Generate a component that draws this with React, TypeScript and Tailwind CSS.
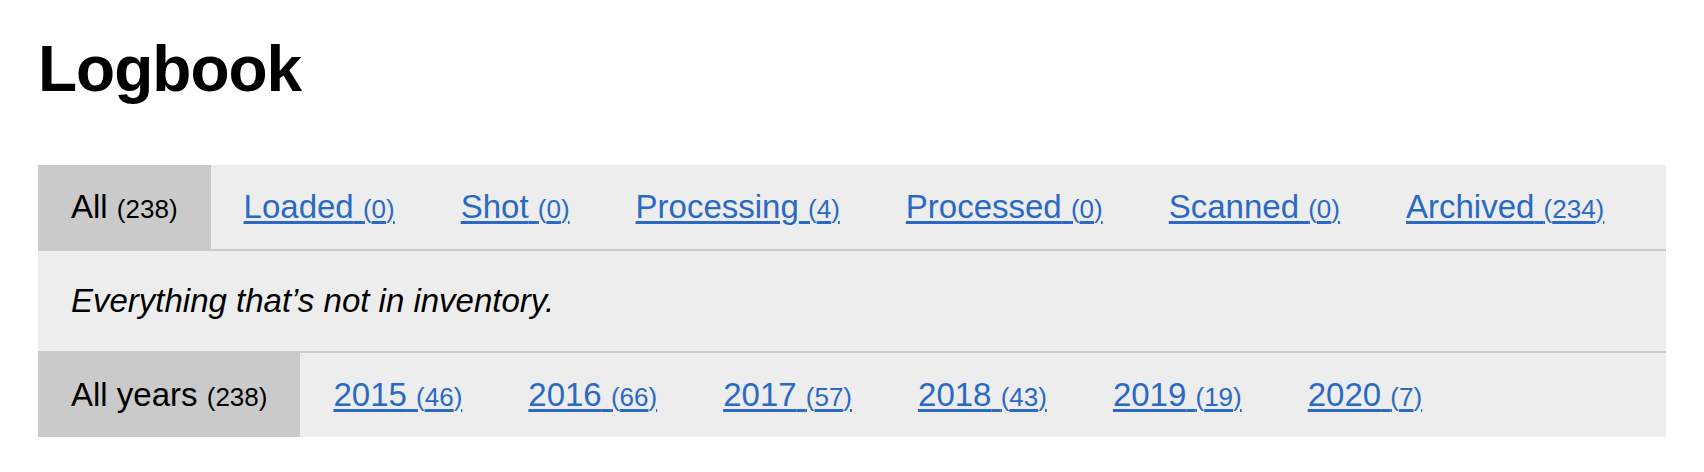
export default function App() {
  const statuses = [
    { label: "All", count: 238, active: true },
    { label: "Loaded", count: 0 },
    { label: "Shot", count: 0 },
    { label: "Processing", count: 4 },
    { label: "Processed", count: 0 },
    { label: "Scanned", count: 0 },
    { label: "Archived", count: 234 },
  ];

  const years = [
    { label: "All years", count: 238, active: true },
    { label: "2015", count: 46 },
    { label: "2016", count: 66 },
    { label: "2017", count: 57 },
    { label: "2018", count: 43 },
    { label: "2019", count: 19 },
    { label: "2020", count: 7 },
  ];

  const renderTab = (t: { label: string; count: number; active?: boolean }) =>
    t.active ? (
      <div key={t.label} className="flex items-center bg-[#cacaca] px-[33px] text-black">
        <span>
          {t.label} <small className="text-[26px]">({t.count})</small>
        </span>
      </div>
    ) : (
      <div key={t.label} className="flex items-center px-[33px]">
        <a href="#" className="text-[#2a69c4] underline underline-offset-[3px]">
          {t.label} <small className="text-[26px]">({t.count})</small>
        </a>
      </div>
    );

  return (
    <div className="min-h-screen bg-white px-[38px] pt-[37px] font-['Liberation_Sans',Arial,sans-serif]">
      <h1 className="text-[64px] font-bold leading-none tracking-[-1px] text-black">Logbook</h1>

      <div className="mt-[64px] bg-[#ededed] text-[33px]">
        {/* Status tabs */}
        <nav className="flex h-[86px] border-b-2 border-[#cacaca]">
          {statuses.map(renderTab)}
        </nav>

        {/* Description */}
        <div className="flex h-[102px] items-center border-b-2 border-[#cacaca] px-[33px]">
          <p className="italic text-black">Everything that’s not in inventory.</p>
        </div>

        {/* Year tabs */}
        <nav className="flex h-[84px]">{years.map(renderTab)}</nav>
      </div>
    </div>
  );
}
